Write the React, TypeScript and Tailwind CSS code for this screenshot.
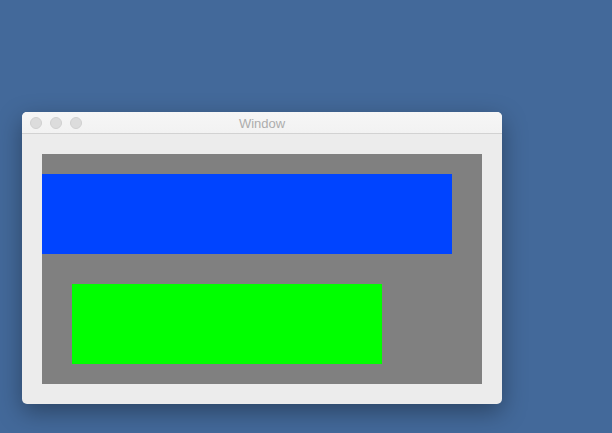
import React from "react";

function TrafficLight() {
  return <div className="w-3 h-3 rounded-full bg-[#dcdcdc] border border-[#d0d0d0]" />;
}

export default function App() {
  return (
    <div className="w-[612px] h-[433px] bg-[#43699a] pl-[22px] pt-[112px] overflow-hidden">
      <div className="w-[480px] rounded-[5px] bg-[#ececec] shadow-[0_8px_24px_rgba(0,0,0,0.35)] overflow-hidden">
        <div className="relative h-[22px] flex items-center bg-gradient-to-b from-[#f6f6f6] to-[#f2f2f2] border-b border-[#d2d2d2]">
          <div className="flex gap-2 pl-2">
            <TrafficLight />
            <TrafficLight />
            <TrafficLight />
          </div>
          <div
            className="absolute inset-0 flex items-center justify-center pt-[2px] text-[13px] text-[#adadad]"
            style={{ fontFamily: '"Liberation Sans", Arial, sans-serif' }}
          >
            Window
          </div>
        </div>
        <div className="p-5">
          <div className="h-[230px] bg-[#808080] pt-5 flex flex-col">
            <div className="w-[410px] h-20 bg-[#0044ff]" />
            <div className="w-[310px] h-20 bg-[#00ff00] ml-[30px] mt-[30px]" />
          </div>
        </div>
      </div>
    </div>
  );
}
